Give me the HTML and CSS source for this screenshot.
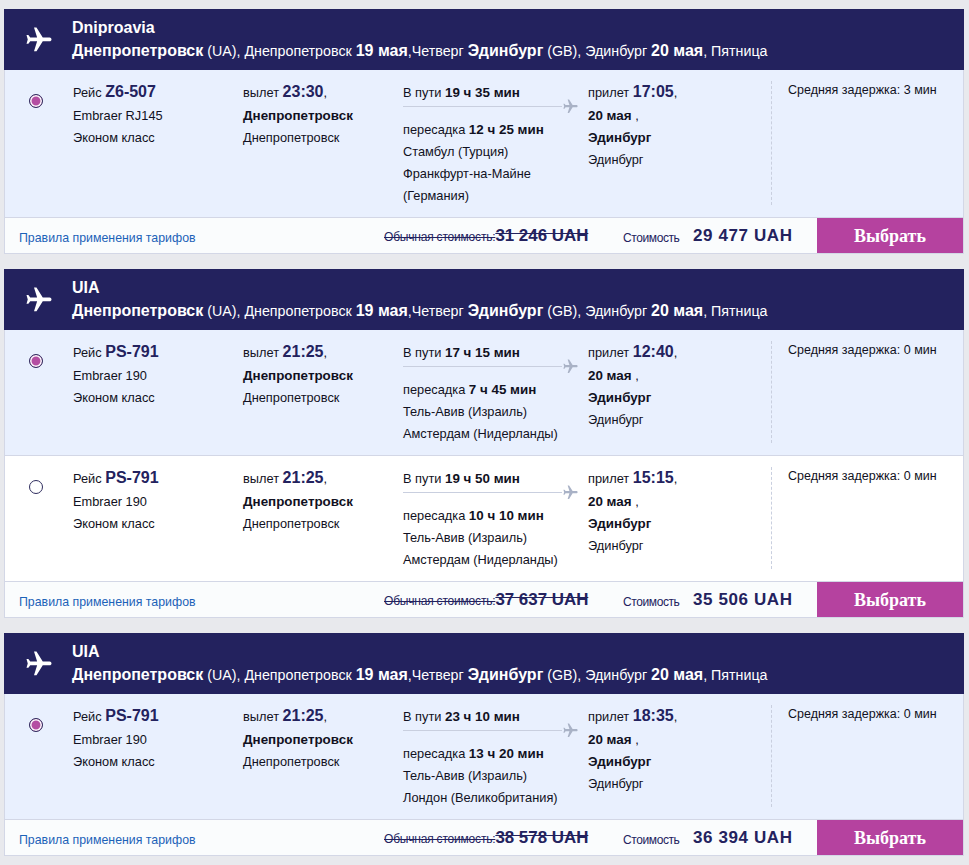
FILE: index.html
```html
<!DOCTYPE html>
<html lang="ru">
<head>
<meta charset="utf-8">
<title>Рейсы</title>
<link rel="stylesheet" href="styles.css">
</head>
<body>
<svg class="defs" width="0" height="0"><defs><symbol id="plane" viewBox="0 0 24 24"><path transform="rotate(90 12 12)" d="M21 16v-2l-8-5V3.5c0-.83-.67-1.5-1.5-1.5S10 2.67 10 3.5V9l-8 5v2l8-2.5V19l-2 1.5V22l3.5-1 3.5 1v-1.5L13 19v-5.5l8 2.5z"/></symbol></defs></svg>

<section class="card">
  <header class="head">
    <svg class="head-icon"><use href="#plane"/></svg>
    <div class="head-text">
      <div class="airline">Dniproavia</div>
      <div class="trip"><b>Днепропетровск</b> (UA), Днепропетровск <b>19 мая</b>,Четверг <b>Эдинбург</b> (GB), Эдинбург <b>20 мая</b>, Пятница</div>
    </div>
  </header>
  <div class="row selected">
    <div class="radio-col"><span class="radio on"></span></div>
    <div class="col-flight"><div class="lead">Рейс <b class="big">Z6-507</b></div><div>Embraer RJ145</div><div>Эконом класс</div></div>
    <div class="col-dep"><div class="lead">вылет <b class="big">23:30</b>,</div><div><b>Днепропетровск</b></div><div>Днепропетровск</div></div>
    <div class="col-route">
      <div>В пути <b>19 ч 35 мин</b></div>
      <div class="track"><span class="track-line"></span><svg class="track-icon"><use href="#plane"/></svg></div>
      <div>пересадка <b>12 ч 25 мин</b></div><div>Стамбул (Турция)</div><div>Франкфурт-на-Майне (Германия)</div>
    </div>
    <div class="col-arr"><div class="lead">прилет <b class="big">17:05</b>,</div><div><b>20 мая</b> ,</div><div><b>Эдинбург</b></div><div>Эдинбург</div></div>
    <div class="col-delay"><div class="delay">Средняя задержка: 3 мин</div></div>
  </div>
  <footer class="foot">
    <a class="rules" href="#">Правила применения тарифов</a>
    <div class="old"><span class="old-label">Обычная стоимость:</span><b>31 246 UAH</b></div>
    <div class="price-label">Стоимость</div>
    <div class="price">29 477 UAH</div>
    <button class="choose">Выбрать</button>
  </footer>
</section>

<section class="card">
  <header class="head">
    <svg class="head-icon"><use href="#plane"/></svg>
    <div class="head-text">
      <div class="airline">UIA</div>
      <div class="trip"><b>Днепропетровск</b> (UA), Днепропетровск <b>19 мая</b>,Четверг <b>Эдинбург</b> (GB), Эдинбург <b>20 мая</b>, Пятница</div>
    </div>
  </header>
  <div class="row selected">
    <div class="radio-col"><span class="radio on"></span></div>
    <div class="col-flight"><div class="lead">Рейс <b class="big">PS-791</b></div><div>Embraer 190</div><div>Эконом класс</div></div>
    <div class="col-dep"><div class="lead">вылет <b class="big">21:25</b>,</div><div><b>Днепропетровск</b></div><div>Днепропетровск</div></div>
    <div class="col-route">
      <div>В пути <b>17 ч 15 мин</b></div>
      <div class="track"><span class="track-line"></span><svg class="track-icon"><use href="#plane"/></svg></div>
      <div>пересадка <b>7 ч 45 мин</b></div><div>Тель-Авив (Израиль)</div><div>Амстердам (Нидерланды)</div>
    </div>
    <div class="col-arr"><div class="lead">прилет <b class="big">12:40</b>,</div><div><b>20 мая</b> ,</div><div><b>Эдинбург</b></div><div>Эдинбург</div></div>
    <div class="col-delay"><div class="delay">Средняя задержка: 0 мин</div></div>
  </div>
  <div class="row plain">
    <div class="radio-col"><span class="radio"></span></div>
    <div class="col-flight"><div class="lead">Рейс <b class="big">PS-791</b></div><div>Embraer 190</div><div>Эконом класс</div></div>
    <div class="col-dep"><div class="lead">вылет <b class="big">21:25</b>,</div><div><b>Днепропетровск</b></div><div>Днепропетровск</div></div>
    <div class="col-route">
      <div>В пути <b>19 ч 50 мин</b></div>
      <div class="track"><span class="track-line"></span><svg class="track-icon"><use href="#plane"/></svg></div>
      <div>пересадка <b>10 ч 10 мин</b></div><div>Тель-Авив (Израиль)</div><div>Амстердам (Нидерланды)</div>
    </div>
    <div class="col-arr"><div class="lead">прилет <b class="big">15:15</b>,</div><div><b>20 мая</b> ,</div><div><b>Эдинбург</b></div><div>Эдинбург</div></div>
    <div class="col-delay"><div class="delay">Средняя задержка: 0 мин</div></div>
  </div>
  <footer class="foot">
    <a class="rules" href="#">Правила применения тарифов</a>
    <div class="old"><span class="old-label">Обычная стоимость:</span><b>37 637 UAH</b></div>
    <div class="price-label">Стоимость</div>
    <div class="price">35 506 UAH</div>
    <button class="choose">Выбрать</button>
  </footer>
</section>

<section class="card">
  <header class="head">
    <svg class="head-icon"><use href="#plane"/></svg>
    <div class="head-text">
      <div class="airline">UIA</div>
      <div class="trip"><b>Днепропетровск</b> (UA), Днепропетровск <b>19 мая</b>,Четверг <b>Эдинбург</b> (GB), Эдинбург <b>20 мая</b>, Пятница</div>
    </div>
  </header>
  <div class="row selected">
    <div class="radio-col"><span class="radio on"></span></div>
    <div class="col-flight"><div class="lead">Рейс <b class="big">PS-791</b></div><div>Embraer 190</div><div>Эконом класс</div></div>
    <div class="col-dep"><div class="lead">вылет <b class="big">21:25</b>,</div><div><b>Днепропетровск</b></div><div>Днепропетровск</div></div>
    <div class="col-route">
      <div>В пути <b>23 ч 10 мин</b></div>
      <div class="track"><span class="track-line"></span><svg class="track-icon"><use href="#plane"/></svg></div>
      <div>пересадка <b>13 ч 20 мин</b></div><div>Тель-Авив (Израиль)</div><div>Лондон (Великобритания)</div>
    </div>
    <div class="col-arr"><div class="lead">прилет <b class="big">18:35</b>,</div><div><b>20 мая</b> ,</div><div><b>Эдинбург</b></div><div>Эдинбург</div></div>
    <div class="col-delay"><div class="delay">Средняя задержка: 0 мин</div></div>
  </div>
  <footer class="foot">
    <a class="rules" href="#">Правила применения тарифов</a>
    <div class="old"><span class="old-label">Обычная стоимость:</span><b>38 578 UAH</b></div>
    <div class="price-label">Стоимость</div>
    <div class="price">36 394 UAH</div>
    <button class="choose">Выбрать</button>
  </footer>
</section>
</body>
</html>
```
FILE: styles.css
```css
html, body { margin: 0; padding: 0; }
body {
  background: #e8e9ed;
  padding: 9px 5px 0 4px;
  font: 12.8px/22px "Liberation Sans", Arial, sans-serif;
  color: #111122;
}
.defs { position: absolute; }
.card { margin-bottom: 15px; }
.head {
  height: 61px;
  background: #23225e;
  color: #fff;
  display: flex;
  align-items: center;
  box-sizing: border-box;
}
.head-icon { width: 30px; height: 30px; fill: #fff; margin: 0 18px 0 20px; flex: none; }
.head-text { align-self: flex-start; padding-top: 8px; }
.airline { font-size: 16px; font-weight: bold; line-height: 22px; }
.trip { font-size: 14.25px; line-height: 23px; white-space: nowrap; }
.trip b { font-size: 16px; }
.row {
  display: grid;
  grid-template-columns: 68px 170px 160px 185px 183px 1fr;
  padding: 12px 0 10px;
  box-sizing: border-box;
  border-left: 1px solid #d3d7e6;
  border-right: 1px solid #d3d7e6;
  min-height: 125px;
}
.row b { font-size: 13.4px; }
.selected { background: #e9f0fe; }
.plain { background: #fff; border-top: 1px solid #d3d7e6; min-height: 126px; }
.radio-col { padding: 12px 0 0 24px; }
.radio {
  display: block;
  width: 14px;
  height: 14px;
  box-sizing: border-box;
  border: 1.5px solid #2f2d5e;
  border-radius: 50%;
  background: #fff;
}
.radio.on { background: #b44ea2; box-shadow: inset 0 0 0 1.5px #fff; }
.lead { height: 23px; }
.row .big { font-size: 16px; color: #23225e; line-height: 1; }
.col-route { width: 176px; }
.track { display: flex; align-items: center; height: 6px; margin: -1px 0 10px; width: 177px; }
.track-line { width: 159px; height: 1px; background: #c9cfdf; flex: none; }
.track-icon { width: 17px; height: 17px; fill: #a9b2c6; flex: none; }
.col-delay { border-left: 1px dashed #c9cfdf; padding-left: 16px; margin: -1px 0 2px; font-size: 12.5px; }
.delay { margin-top: -2px; }
.foot {
  height: 37px;
  display: flex;
  align-items: center;
  background: #fafcfd;
  border: 1px solid #d3d7e6;
  box-sizing: border-box;
}
.rules { color: #1c62b8; text-decoration: none; margin-left: 14px; padding-top: 4px; width: 365px; font-size: 12.35px; }
.old { text-decoration: line-through; color: #23225e; width: 239px; padding-top: 1px; white-space: nowrap; font-size: 12px; }
.old-label { letter-spacing: -0.2px; }
.old b { font-size: 16.9px; }
.price-label { color: #23225e; width: 70px; padding-top: 4px; letter-spacing: -0.4px; font-size: 12px; }
.price { font-size: 17px; font-weight: bold; color: #23225e; width: 124px; padding-top: 1px; letter-spacing: 0.6px; }
.choose {
  flex: 1;
  align-self: stretch;
  border: 0;
  background: #b5429f;
  color: #fff;
  font: bold 18px "Liberation Serif", serif;
  padding: 1px 0 0;
}
```
